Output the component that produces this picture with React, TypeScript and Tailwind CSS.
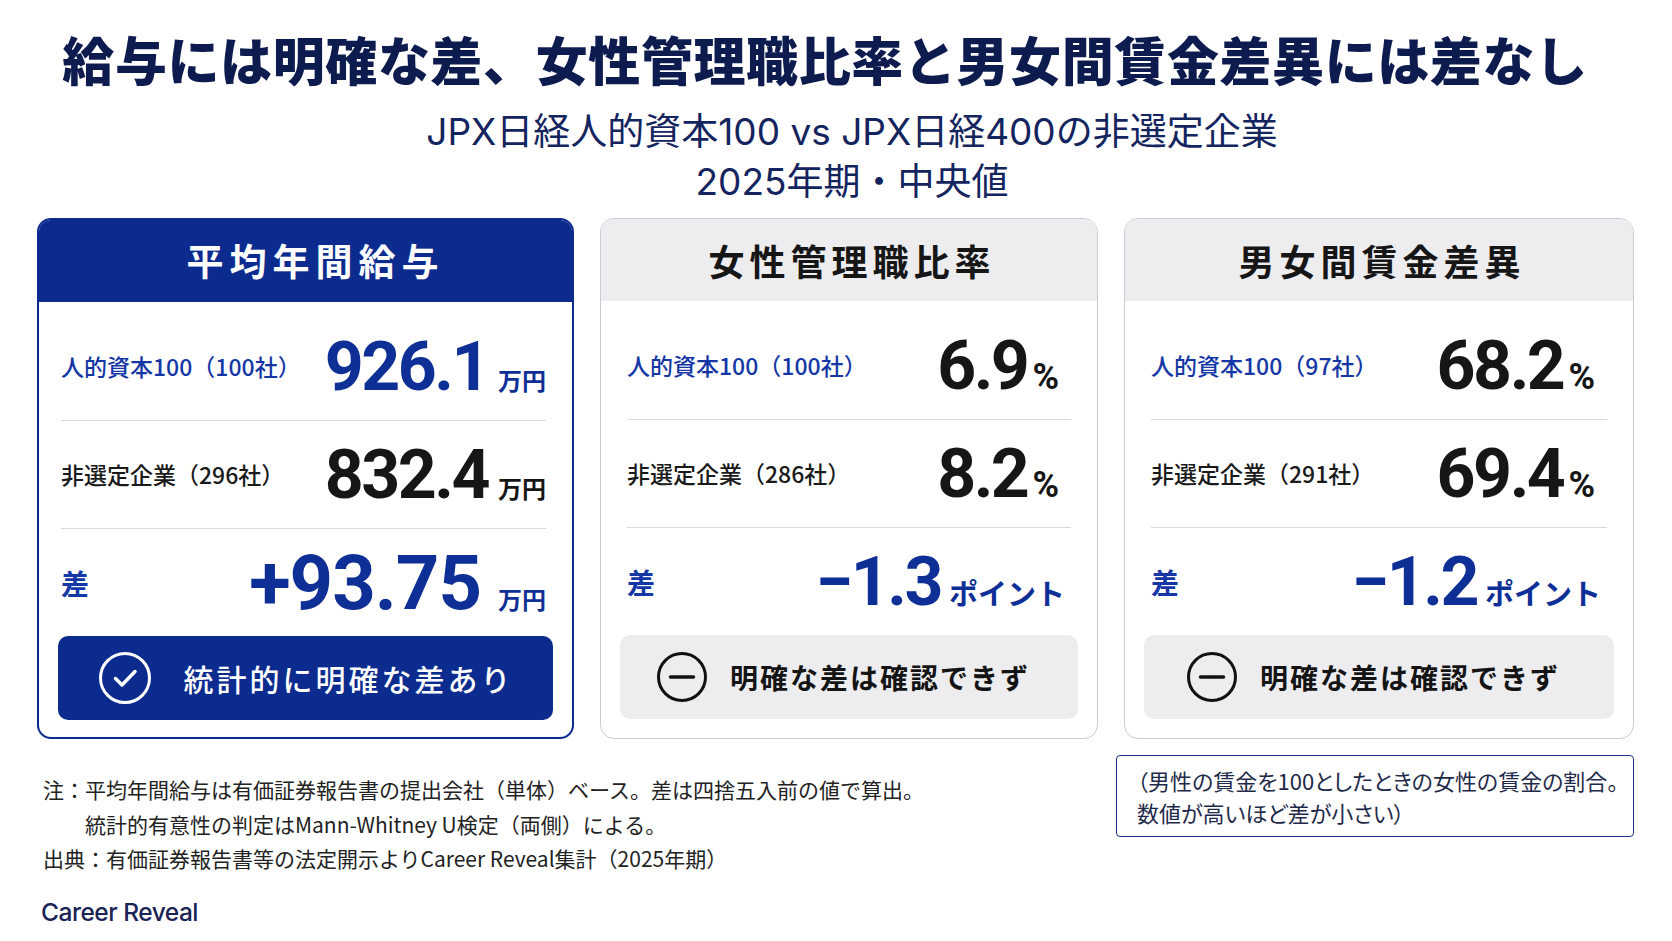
type Row = { label: string; value: string; unit: string; labelBlue?: boolean; valueBlue?: boolean };

type CardProps = {
  title: string;
  primary?: boolean;
  rows: Row[];
  diff: { value: string; unit: string };
  significant: boolean;
  unitKind: "yen" | "pct";
};

function CheckIcon() {
  return (
    <svg width="54" height="54" viewBox="0 0 54 54" fill="none">
      <circle cx="27" cy="27" r="24.5" stroke="white" strokeWidth="3" />
      <path d="M17.5 27.5 L24 34 L37 20.5" stroke="white" strokeWidth="3.5" strokeLinecap="round" strokeLinejoin="round" />
    </svg>
  );
}

function MinusIcon() {
  return (
    <svg width="52" height="52" viewBox="0 0 52 52" fill="none">
      <circle cx="26" cy="26" r="23.5" stroke="#111111" strokeWidth="3" />
      <path d="M14.5 26 H37.5" stroke="#111111" strokeWidth="3.5" strokeLinecap="round" />
    </svg>
  );
}

function Card({ title, primary, rows, diff, significant, unitKind }: CardProps) {
  const yen = unitKind === "yen";
  const rowPad = primary ? "ml-[22px] mr-[26px]" : "mx-[26px]";
  return (
    <div
      className={
        primary
          ? "flex flex-col overflow-hidden rounded-[14px] border-2 border-[#0b2b8f] bg-white"
          : "flex flex-col overflow-hidden rounded-[14px] border-[1.5px] border-[#c8ccd6] bg-white"
      }
    >
      <div
        className={
          primary
            ? "flex h-[82px] items-center justify-center bg-[#0b2b8f] pl-[20px] text-[37px] font-bold tracking-[6px] text-white"
            : "flex h-[82px] items-center justify-center bg-[#ededf0] pl-[6px] text-[36px] font-bold tracking-[5px] text-[#161616]"
        }
      >
        {title}
      </div>
      <div className="flex flex-col pt-[11px] pb-[17px]">
        {rows.map((r) => (
          <div key={r.label} className={`${rowPad} flex h-[108px] items-center justify-between border-b-[1.5px] border-[#d6dae3]`}>
            <span className={r.labelBlue ? "text-[23px] font-medium text-[#1537a6]" : "text-[23px] font-medium text-[#1a1a1a]"}>
              {r.label}
            </span>
            <span
              className={
                r.valueBlue
                  ? "flex items-baseline font-['Roboto',sans-serif] text-[#0e2f96]"
                  : yen
                    ? "flex items-baseline font-['Roboto',sans-serif] text-[#161616]"
                    : "flex items-baseline pr-[12px] font-['Roboto',sans-serif] text-[#161616]"
              }
            >
              <span className="text-[68px] font-bold tracking-[-2.5px]">{r.value}</span>
              <span
                className={
                  yen
                    ? "ml-[10px] font-['Noto_Sans_CJK_JP',sans-serif] text-[24px] font-bold"
                    : "ml-[5px] text-[36px] font-bold"
                }
              >
                {r.unit}
              </span>
            </span>
          </div>
        ))}
        <div className={`${rowPad} flex h-[107px] items-center justify-between`}>
          <span className="text-[28px] font-bold text-[#1537a6]">差</span>
          <span
            className={
              yen
                ? "flex items-baseline font-['Roboto',sans-serif] text-[#0e2f96]"
                : "flex items-baseline pr-[6px] font-['Roboto',sans-serif] text-[#0e2f96]"
            }
          >
            <span className={yen ? "text-[76px] font-bold tracking-[-1px]" : "text-[68px] font-bold tracking-[-2.5px]"}>
              {diff.value}
            </span>
            <span
              className={
                yen
                  ? "ml-[17px] font-['Noto_Sans_CJK_JP',sans-serif] text-[24px] font-bold"
                  : "ml-[8px] font-['Noto_Sans_CJK_JP',sans-serif] text-[29px] font-bold"
              }
            >
              {diff.unit}
            </span>
          </span>
        </div>
        {significant ? (
          <div className="mx-[19px] flex h-[84px] items-center justify-center gap-[32px] rounded-[10px] bg-[#0b2b8f] text-white">
            <CheckIcon />
            <span className="text-[30px] font-medium tracking-[3px]">統計的に明確な差あり</span>
          </div>
        ) : (
          <div className="mx-[19px] flex h-[84px] items-center justify-center gap-[22px] rounded-[10px] bg-[#ededf0] pr-[12px] text-[#141414]">
            <MinusIcon />
            <span className="text-[28px] font-bold tracking-[2px]">明確な差は確認できず</span>
          </div>
        )}
      </div>
    </div>
  );
}

export default function App() {
  return (
    <div className="h-[941px] w-[1672px] bg-white font-['Noto_Sans_CJK_JP',sans-serif]">
      <div className="flex flex-col items-center pt-[28px]">
        <h1 className="pr-[22px] text-[52px] leading-[62px] font-black tracking-[0.6px] text-[#0d1b4f]">
          給与には明確な差、女性管理職比率と男女間賃金差異には差なし
        </h1>
        <div className="mt-[17px] flex flex-col items-center pl-[32px] font-['Inter','Noto_Sans_CJK_JP',sans-serif] text-[37px] leading-[50px] text-[#14245e]">
          <p>JPX日経人的資本100 vs JPX日経400の非選定企業</p>
          <p>2025年期・中央値</p>
        </div>
      </div>

      <div className="mt-[11px] grid grid-cols-[537px_498px_510px] gap-x-[26px] pl-[37px]">
        <Card
          title="平均年間給与"
          primary
          unitKind="yen"
          rows={[
            { label: "人的資本100（100社）", value: "926.1", unit: "万円", labelBlue: true, valueBlue: true },
            { label: "非選定企業（296社）", value: "832.4", unit: "万円" },
          ]}
          diff={{ value: "+93.75", unit: "万円" }}
          significant
        />
        <Card
          title="女性管理職比率"
          unitKind="pct"
          rows={[
            { label: "人的資本100（100社）", value: "6.9", unit: "%", labelBlue: true },
            { label: "非選定企業（286社）", value: "8.2", unit: "%" },
          ]}
          diff={{ value: "−1.3", unit: "ポイント" }}
          significant={false}
        />
        <Card
          title="男女間賃金差異"
          unitKind="pct"
          rows={[
            { label: "人的資本100（97社）", value: "68.2", unit: "%", labelBlue: true },
            { label: "非選定企業（291社）", value: "69.4", unit: "%" },
          ]}
          diff={{ value: "−1.2", unit: "ポイント" }}
          significant={false}
        />

        <div className="col-span-2 pt-[33px] pl-[6px] text-[21px] leading-[34.5px] text-[#222222]">
          <p>注：平均年間給与は有価証券報告書の提出会社（単体）ベース。差は四捨五入前の値で算出。</p>
          <p className="pl-[42px]">統計的有意性の判定はMann-Whitney U検定（両側）による。</p>
          <p>出典：有価証券報告書等の法定開示よりCareer Reveal集計（2025年期）</p>
          <p className="mt-[19px] -ml-[2px] font-['Inter',sans-serif] text-[24.5px] font-medium tracking-[-0.5px] text-[#1a2356]">
            Career Reveal
          </p>
        </div>
        <div className="-ml-[8px] mt-[16px] self-start rounded-[4px] border-[1.5px] border-[#1b2f86] py-[8px] pr-[6px] pl-[20px] text-[22px] leading-[32px] whitespace-nowrap text-[#1f2a4a] [font-feature-settings:'palt']">
          <p>（男性の賃金を100としたときの女性の賃金の割合。</p>
          <p>数値が高いほど差が小さい）</p>
        </div>
      </div>
    </div>
  );
}
